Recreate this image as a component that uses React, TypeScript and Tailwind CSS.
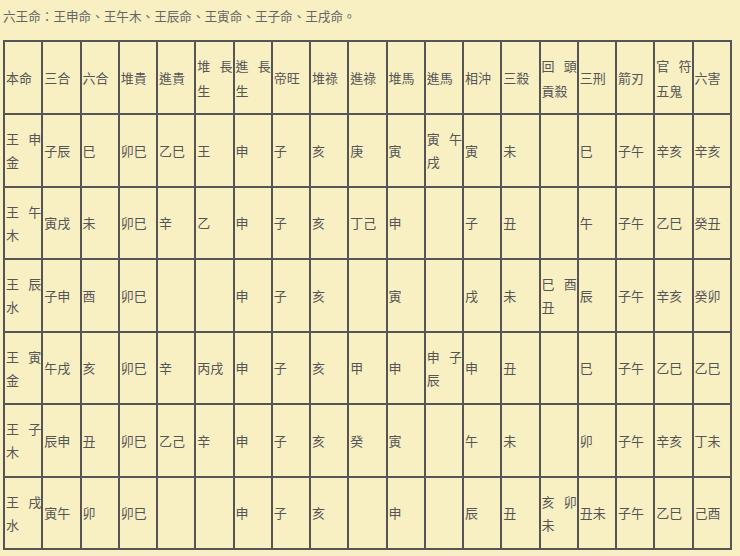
import React from "react";

const header = [
  "本命", "三合", "六合", "堆貴", "進貴", "堆長生", "進長生", "帝旺", "堆祿", "進祿",
  "堆馬", "進馬", "相沖", "三殺", "回頭貢殺", "三刑", "箭刃", "官符五鬼", "六害",
];

const rows: string[][] = [
  ["王申金", "子辰", "巳", "卯巳", "乙巳", "王", "申", "子", "亥", "庚", "寅", "寅午戌", "寅", "未", "", "巳", "子午", "辛亥", "辛亥"],
  ["王午木", "寅戌", "未", "卯巳", "辛", "乙", "申", "子", "亥", "丁己", "申", "", "子", "丑", "", "午", "子午", "乙巳", "癸丑"],
  ["王辰水", "子申", "酉", "卯巳", "", "", "申", "子", "亥", "", "寅", "", "戌", "未", "巳酉丑", "辰", "子午", "辛亥", "癸卯"],
  ["王寅金", "午戌", "亥", "卯巳", "辛", "丙戌", "申", "子", "亥", "甲", "申", "申子辰", "申", "丑", "", "巳", "子午", "乙巳", "乙巳"],
  ["王子木", "辰申", "丑", "卯巳", "乙己", "辛", "申", "子", "亥", "癸", "寅", "", "午", "未", "", "卯", "子午", "辛亥", "丁未"],
  ["王戌水", "寅午", "卯", "卯巳", "", "", "申", "子", "亥", "", "申", "", "辰", "丑", "亥卯未", "丑未", "子午", "乙巳", "己酉"],
];

const font = { fontFamily: '"Noto Sans CJK TC", "Noto Sans CJK SC", sans-serif' };

export default function App() {
  return (
    <div
      className="w-[740px] h-[556px] bg-[#f8efc3] text-[#555] px-[3px] pt-[6px] overflow-hidden"
      style={font}
    >
      <p className="text-[12.6px] leading-[20px] text-[#666] m-0">
        六王命：王申命、王午木、王辰命、王寅命、王子命、王戌命。
      </p>
      <table className="mt-[14px] w-[729px] table-fixed border-collapse border-2 border-[#555]">
        <tbody>
          <tr>
            {header.map((h, i) => (
              <td
                key={i}
                className="h-[73px] border-2 border-[#555] p-0 pl-px align-middle text-[13px] leading-[25px] text-justify break-all"
              >
                {h}
              </td>
            ))}
          </tr>
          {rows.map((r, ri) => (
            <tr key={ri}>
              {r.map((c, ci) => (
                <td
                  key={ci}
                  className="h-[72.5px] border-2 border-[#555] p-0 pl-px align-middle text-[13px] leading-[23px] text-justify break-all"
                >
                  {c}
                </td>
              ))}
            </tr>
          ))}
        </tbody>
      </table>
    </div>
  );
}
